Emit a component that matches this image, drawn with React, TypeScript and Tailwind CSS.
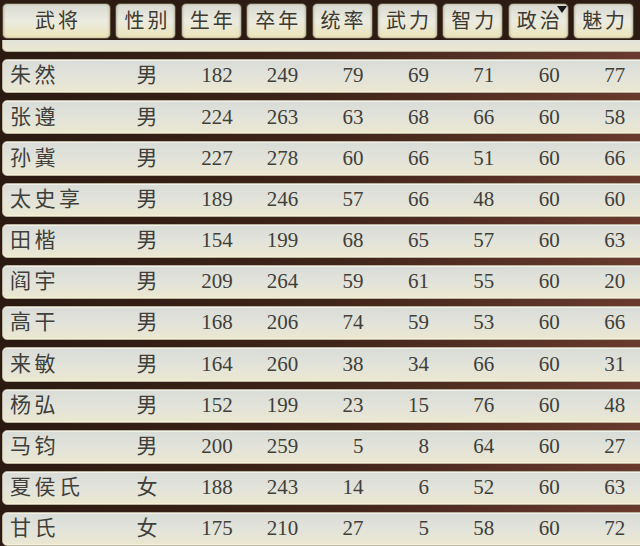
const headers = ["武将", "性别", "生年", "卒年", "统率", "武力", "智力", "政治", "魅力"];

type Officer = [string, string, number, number, number, number, number, number, number];

const officers: Officer[] = [
  ["朱然", "男", 182, 249, 79, 69, 71, 60, 77],
  ["张遵", "男", 224, 263, 63, 68, 66, 60, 58],
  ["孙冀", "男", 227, 278, 60, 66, 51, 60, 66],
  ["太史享", "男", 189, 246, 57, 66, 48, 60, 60],
  ["田楷", "男", 154, 199, 68, 65, 57, 60, 63],
  ["阎宇", "男", 209, 264, 59, 61, 55, 60, 20],
  ["高干", "男", 168, 206, 74, 59, 53, 60, 66],
  ["来敏", "男", 164, 260, 38, 34, 66, 60, 31],
  ["杨弘", "男", 152, 199, 23, 15, 76, 60, 48],
  ["马钧", "男", 200, 259, 5, 8, 64, 60, 27],
  ["夏侯氏", "女", 188, 243, 14, 6, 52, 60, 63],
  ["甘氏", "女", 175, 210, 27, 5, 58, 60, 72],
];

const font = { fontFamily: '"Liberation Serif", "Noto Sans CJK SC", serif' };

const Row = ({ o }: { o: Officer }) => {
  const [name, sex, ...nums] = o;
  return (
    <div className="ml-[2px] -mr-[20px] h-[34.2px] shrink-0 rounded-l-[5px] border border-[#b9b4a0] bg-linear-to-b from-[#d9dcd7] via-[#e2e3da] to-[#ebe7d0] shadow-[inset_0_1px_0_#f1f1ea,inset_0_-1px_0_#f5f0d8]">
      <div className="grid h-full grid-cols-[109px_repeat(8,61px)] items-center gap-x-[4.4px] text-[21px] text-[#403f3a]">
        <span className="pl-[7px] tracking-[3.5px]">{name}</span>
        <span className="text-center">{sex}</span>
        {nums.map((n, i) => (
          <span key={i} className="pr-[10px] text-right">
            {n}
          </span>
        ))}
      </div>
    </div>
  );
};

export default function App() {
  return (
    <div
      className="relative h-[546px] w-[640px] overflow-hidden bg-linear-to-r from-[#2a1a12] via-[#3f2419] to-[#6a3a2e]"
      style={font}
    >
      <div className="grid h-[40px] grid-cols-[109px_repeat(8,61px)] gap-x-[4.4px] bg-[#2b1b12] pl-[2px] pt-[3px] pb-[1px]">
        {headers.map((h, i) => (
          <div
            key={h}
            className="relative flex items-center justify-center rounded-[5px] border border-[#5a4a36] bg-linear-to-b from-[#d8d9d1] via-[#ebebe0] to-[#ece4b8] text-[20px] tracking-[3px] text-[#3d3a31] shadow-[inset_1px_0_2px_#b8b6a4,inset_-1px_0_2px_#b8b6a4]"
          >
            <span className="pl-[3px]">{h}</span>
            {i === 7 && (
              <svg className="absolute right-[1px] top-[2px]" width="10" height="8" viewBox="0 0 10 8">
                <path d="M0 0 H10 L5 7 Z" fill="#1a1a1a" />
              </svg>
            )}
          </div>
        ))}
      </div>

      {/* previous row, scrolled mostly under the header */}
      <div className="ml-[2px] -mr-[20px] h-[12px] rounded-bl-[5px] border-x border-b border-[#b9b4a0] bg-linear-to-b from-[#e2e3da] to-[#ebe7d0]" />

      <div className="mt-[7px] flex flex-col gap-[7px]">
        {officers.map((o) => (
          <Row key={o[0]} o={o} />
        ))}
      </div>
    </div>
  );
}
